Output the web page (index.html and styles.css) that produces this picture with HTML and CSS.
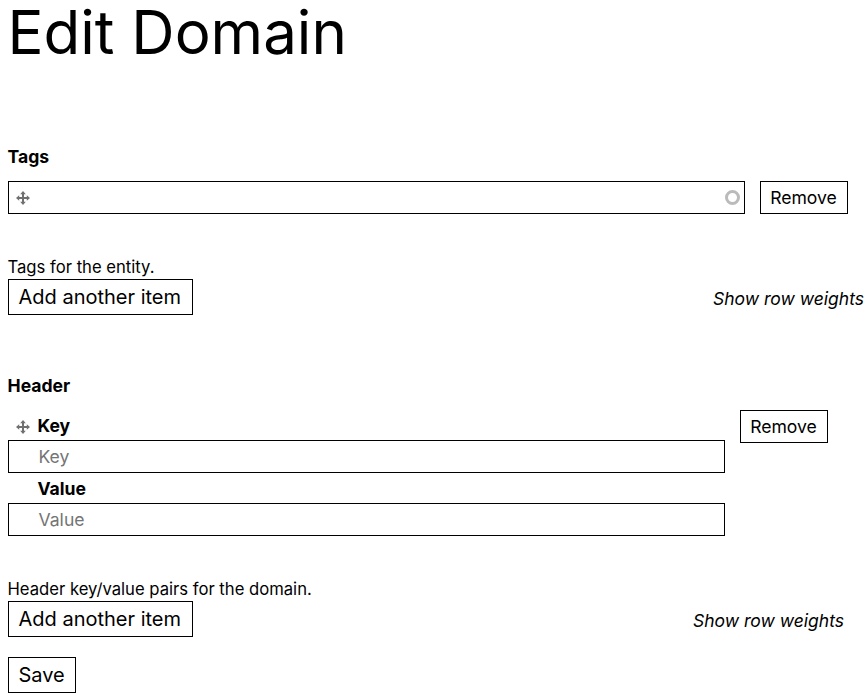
FILE: index.html
```html
<!DOCTYPE html>
<html lang="en">
<head>
<meta charset="utf-8">
<title>Edit Domain</title>
<link rel="stylesheet" href="styles.css">
</head>
<body>
<h1 class="title">Edit Domain</h1>
<form class="form">
  <section class="field field-tags">
    <h4 class="field-label">Tags</h4>
    <div class="row row-tags">
      <div class="input-box">
        <svg class="handle handle-in" viewBox="0 0 14 14" width="14" height="14"><path d="M7 0 9.8 3.2H8V6H10.8V4.2L14 7 10.8 9.8V8H8V10.8H9.8L7 14 4.2 10.8H6V8H3.2V9.8L0 7 3.2 4.2V6H6V3.2H4.2Z"/></svg>
        <span class="throbber"></span>
      </div>
      <button type="button" class="btn btn-small">Remove</button>
    </div>
    <p class="desc">Tags for the entity.</p>
    <div class="actions">
      <button type="button" class="btn btn-large">Add another item</button>
      <em class="weights">Show row weights</em>
    </div>
  </section>
  <section class="field field-header">
    <h4 class="field-label">Header</h4>
    <div class="row row-header">
      <div class="pair">
        <div class="sub-label sub-key">
          <svg class="handle handle-key" viewBox="0 0 14 14" width="14" height="14"><path d="M7 0 9.8 3.2H8V6H10.8V4.2L14 7 10.8 9.8V8H8V10.8H9.8L7 14 4.2 10.8H6V8H3.2V9.8L0 7 3.2 4.2V6H6V3.2H4.2Z"/></svg>
          <label class="sub-text">Key</label>
        </div>
        <div class="input-box text-box">Key</div>
        <div class="sub-label sub-value"><label class="sub-text">Value</label></div>
        <div class="input-box text-box">Value</div>
      </div>
      <button type="button" class="btn btn-small">Remove</button>
    </div>
    <p class="desc">Header key/value pairs for the domain.</p>
    <div class="actions actions-header">
      <button type="button" class="btn btn-large">Add another item</button>
      <em class="weights">Show row weights</em>
    </div>
  </section>
  <button type="button" class="btn btn-large btn-save">Save</button>
</form>
</body>
</html>
```
FILE: styles.css
```css
* { box-sizing: border-box; }
html, body { margin: 0; padding: 0; }
body {
  padding: 0 0 0 8px;
  font-family: Inter, "Liberation Sans", sans-serif;
  font-size: 16px;
  line-height: 20px;
  color: #000;
  background: #fff;
  overflow: hidden;
}
.title {
  margin: 0 0 0 -0.5px;
  font-size: 60px;
  line-height: 64px;
  font-weight: 400;
}
.form { display: flex; flex-direction: column; align-items: stretch; }
.field-tags { margin-top: 82px; }
.field-header { margin-top: 60px; }
.field-label {
  margin: 0 0 0 -0.5px;
  font-size: 17.6px;
  line-height: 22px;
  font-weight: 700;
}
.row { display: flex; align-items: flex-start; }
.row-tags { margin-top: 13px; gap: 15px; }
.row-header { margin-top: 13px; gap: 15px; }
.pair { width: 717px; }
.row-tags .input-box { width: 737px; }
.input-box {
  height: 33px;
  border: 1px solid #000;
  display: flex;
  align-items: center;
}
.text-box {
  padding-left: 29.5px;
  color: #757575;
  font-size: 17.6px;
}
.handle { fill: #707070; flex: none; }
.handle-in { margin-left: 7px; }
.handle-key { margin-top: 1px; }
.throbber {
  margin-left: auto;
  margin-right: 4px;
  width: 15px;
  height: 15px;
  border: 3px solid #bbb;
  border-radius: 50%;
}
.btn {
  background: #fff;
  border: 1px solid #000;
  border-radius: 0;
  padding: 0;
  font-family: inherit;
  color: #000;
  flex: none;
}
.btn-small { width: 88px; height: 33px; padding-right: 1px; font-size: 17.6px; }
.btn-large { height: 36px; padding: 0 10.5px 0 9.5px; font-size: 20px; width: fit-content; }
.sub-label {
  display: flex;
  align-items: center;
  font-size: 17.6px;
  font-weight: 700;
  height: 30px;
  padding-top: 2px;
}
.sub-key { gap: 7.5px; padding-left: 8px; }
.sub-value { padding-left: 29.5px; }
.desc {
  margin: 43px 0 0 -0.5px;
  padding-bottom: 2px;
  font-size: 16.65px;
  line-height: 20px;
}
.actions { display: flex; justify-content: space-between; align-items: center; margin-right: 4px; }
.actions-header { margin-right: 24px; }
.weights { font-size: 17.5px; font-style: italic; margin-top: 4px; }
.btn-save { margin-top: 20px; }
```
